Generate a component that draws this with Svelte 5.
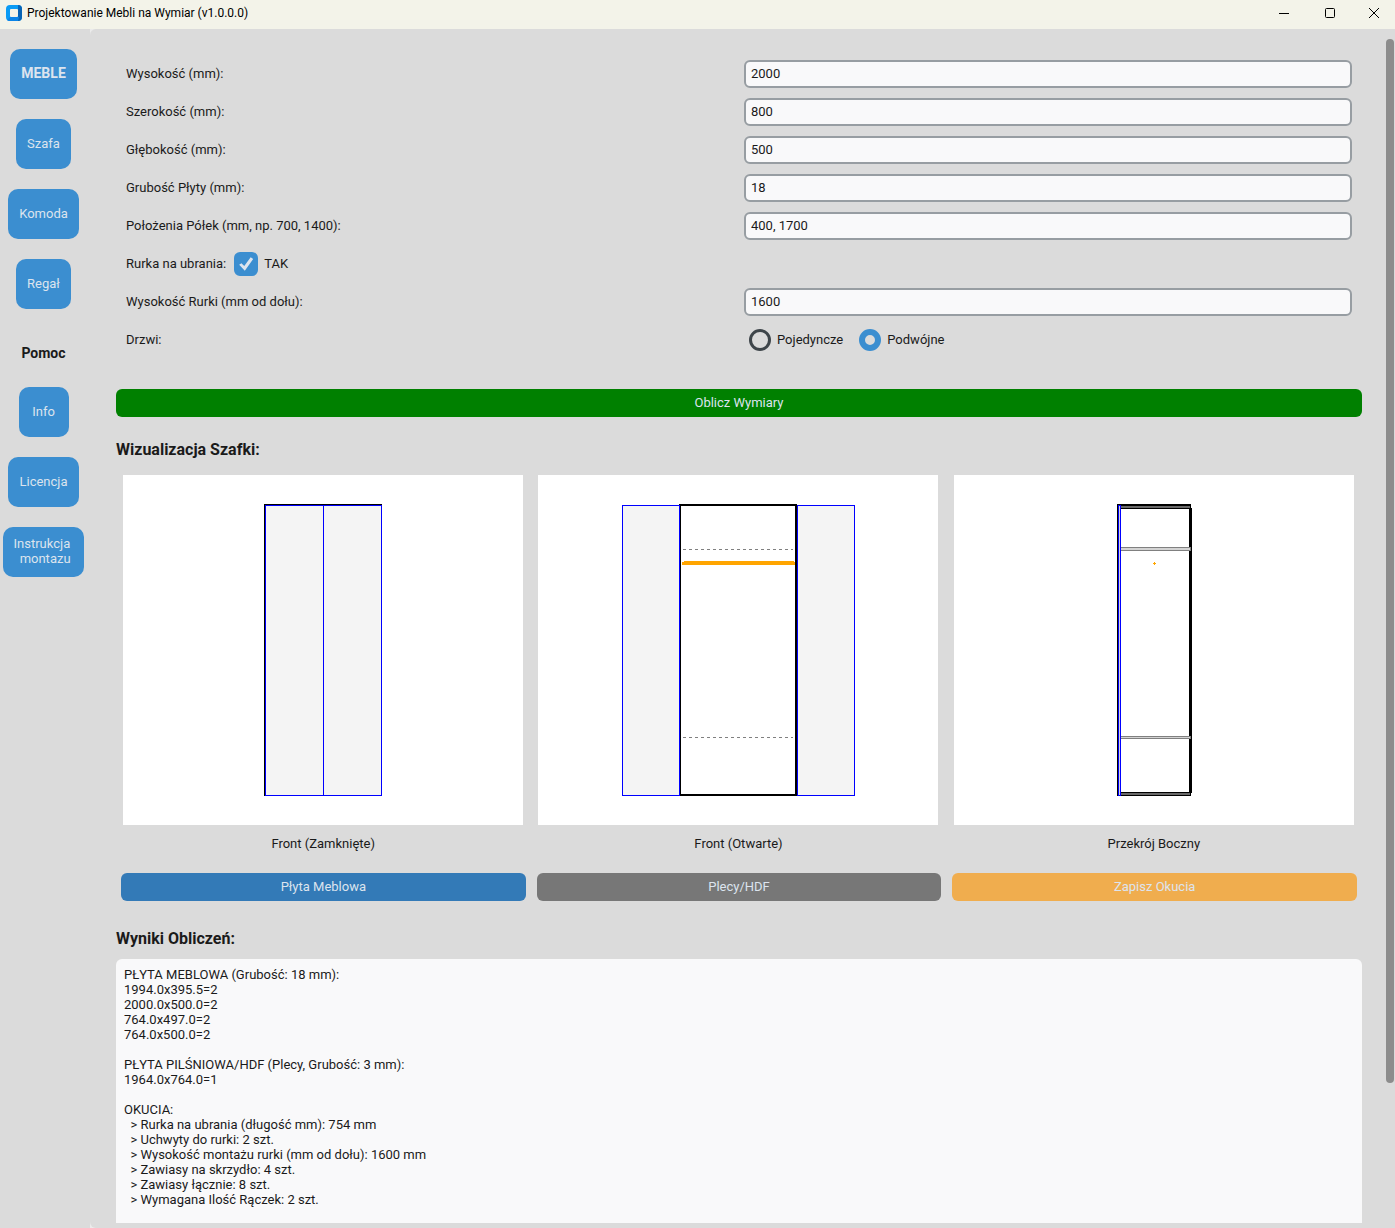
<script>
  let height = "2000"
  let width = "800"
  let depth = "500"
  let thickness = "18"
  let shelves = "400, 1700"
  let hasRod = true
  let rodHeight = "1600"
  let doors = "double"

  const furniture = ["Szafa", "Komoda", "Regał"]
  const help = ["Info", "Licencja", "Instrukcja \n montazu"]

  const results = `PŁYTA MEBLOWA (Grubość: 18 mm):
1994.0x395.5=2
2000.0x500.0=2
764.0x497.0=2
764.0x500.0=2

PŁYTA PILŚNIOWA/HDF (Plecy, Grubość: 3 mm):
1964.0x764.0=1

OKUCIA:
  > Rurka na ubrania (długość mm): 754 mm
  > Uchwyty do rurki: 2 szt.
  > Wysokość montażu rurki (mm od dołu): 1600 mm
  > Zawiasy na skrzydło: 4 szt.
  > Zawiasy łącznie: 8 szt.
  > Wymagana Ilość Rączek: 2 szt.
`

  // Scrollbar thumb follows the scrolled panel
  let viewHeight = 1
  let contentHeight = 1
  let trackHeight = 1
  let scrollTop = 0

  $: thumbSize = Math.min(1, viewHeight / contentHeight) * trackHeight
  $: thumbTop = (scrollTop / contentHeight) * trackHeight

  function handleScroll(e) {
    scrollTop = e.target.scrollTop
  }
</script>

<div class="window">
  <header class="titlebar">
    <svg class="logo" width="16" height="16" viewBox="0 0 16 16" aria-hidden="true">
      <rect width="16" height="16" rx="4" fill="#0a9bf5" />
      <path d="M12 0a4 4 0 0 1 4 4v8a4 4 0 0 1-4 4z" fill="#0763b5" />
      <path d="M4 12h9l-1 4H4a4 4 0 0 1-3-1z" fill="#0a84e8" />
      <rect x="4" y="4" width="8" height="8" rx="1" fill="#f3f3e9" />
    </svg>
    <h1 class="title">Projektowanie Mebli na Wymiar (v1.0.0.0)</h1>
    <div class="windowButtons">
      <button class="windowButton" aria-label="Minimalizuj">
        <svg width="12" height="12" viewBox="0 0 12 12"><path d="M1 6.5h10" /></svg>
      </button>
      <button class="windowButton" aria-label="Maksymalizuj">
        <svg width="12" height="12" viewBox="0 0 12 12">
          <rect x="1.5" y="1.5" width="9" height="9" rx="1" />
        </svg>
      </button>
      <button class="windowButton" aria-label="Zamknij">
        <svg width="12" height="12" viewBox="0 0 12 12"><path d="M1 1l10 10M11 1L1 11" /></svg>
      </button>
    </div>
  </header>

  <div class="body">
    <nav class="sidebar">
      <button class="navButton bold">MEBLE</button>
      {#each furniture as name}
        <button class="navButton">{name}</button>
      {/each}
      <h2 class="navTitle">Pomoc</h2>
      {#each help as name}
        <button class="navButton">{name}</button>
      {/each}
    </nav>

    <main class="main">
      <div class="scroller" bind:clientHeight={viewHeight} on:scroll={handleScroll}>
        <div class="content" bind:clientHeight={contentHeight}>
          <form class="form" on:submit|preventDefault>
            <label class="label" for="height">Wysokość (mm):</label>
            <input id="height" class="input" type="text" bind:value={height} />
            <label class="label" for="width">Szerokość (mm):</label>
            <input id="width" class="input" type="text" bind:value={width} />
            <label class="label" for="depth">Głębokość (mm):</label>
            <input id="depth" class="input" type="text" bind:value={depth} />
            <label class="label" for="thickness">Grubość Płyty (mm):</label>
            <input id="thickness" class="input" type="text" bind:value={thickness} />
            <label class="label" for="shelves">Położenia Półek (mm, np. 700, 1400):</label>
            <input id="shelves" class="input" type="text" bind:value={shelves} />
            <div class="rodRow">
              <span class="label">Rurka na ubrania:</span>
              <label class="option">
                <input class="checkbox" type="checkbox" bind:checked={hasRod} />
                <span class="label">TAK</span>
              </label>
            </div>
            <label class="label" for="rodHeight">Wysokość Rurki (mm od dołu):</label>
            <input id="rodHeight" class="input" type="text" bind:value={rodHeight} />
            <span class="label">Drzwi:</span>
            <div class="doors">
              <label class="option">
                <input class="radio" type="radio" name="doors" value="single" bind:group={doors} />
                <span class="label">Pojedyncze</span>
              </label>
              <label class="option">
                <input class="radio" type="radio" name="doors" value="double" bind:group={doors} />
                <span class="label">Podwójne</span>
              </label>
            </div>
          </form>

          <button class="button green">Oblicz Wymiary</button>

          <h2 class="heading">Wizualizacja Szafki:</h2>
          <div class="views">
            <figure class="view">
              <svg class="canvas" viewBox="0 0 400 350" shape-rendering="crispEdges">
                <rect x="141" y="29" width="118" height="292" fill="#000" />
                <rect x="142" y="30" width="117" height="291" fill="#00f" />
                <rect x="143" y="31" width="57" height="289" fill="#f4f4f4" />
                <rect x="201" y="31" width="57" height="289" fill="#f4f4f4" />
              </svg>
              <figcaption>Front (Zamknięte)</figcaption>
            </figure>
            <figure class="view">
              <svg class="canvas" viewBox="0 0 400 350" shape-rendering="crispEdges">
                <rect x="141" y="29" width="118" height="292" fill="#000" />
                <rect x="143" y="31" width="114" height="288" fill="#fff" />
                <rect x="84" y="30" width="58" height="291" fill="#00f" />
                <rect x="85" y="31" width="56" height="289" fill="#f4f4f4" />
                <rect x="259" y="30" width="58" height="291" fill="#00f" />
                <rect x="260" y="31" width="56" height="289" fill="#f4f4f4" />
                <path d="M145 74.5h110M145 262.5h110" stroke="#808080" stroke-dasharray="3 3" />
                <rect x="146" y="86" width="110" height="4" fill="#ffa500" />
                <rect x="144" y="87" width="113" height="3" fill="#ffa500" />
              </svg>
              <figcaption>Front (Otwarte)</figcaption>
            </figure>
            <figure class="view">
              <svg class="canvas" viewBox="0 0 400 350" shape-rendering="crispEdges">
                <rect x="235" y="33" width="3" height="285" fill="#000" />
                <rect x="163" y="29" width="1" height="292" fill="#000" />
                <rect x="163" y="29" width="74" height="5" fill="#000" />
                <rect x="164" y="31" width="72" height="2" fill="#696969" />
                <rect x="163" y="317" width="74" height="4" fill="#000" />
                <rect x="164" y="318" width="72" height="2" fill="#696969" />
                <rect x="166" y="72" width="71" height="4" fill="#808080" />
                <rect x="167" y="73" width="69" height="2" fill="#d3d3d3" />
                <rect x="166" y="261" width="71" height="3" fill="#808080" />
                <rect x="167" y="262" width="69" height="1" fill="#d3d3d3" />
                <rect x="164" y="30" width="3" height="291" fill="#00f" />
                <rect x="165" y="31" width="1" height="289" fill="#d3d3d3" />
                <path d="M200 87h1v1h1v1h-1v1h-1v-1h-1v-1h1z" fill="#ffa500" />
              </svg>
              <figcaption>Przekrój Boczny</figcaption>
            </figure>
          </div>

          <div class="actions">
            <button class="button blue">Płyta Meblowa</button>
            <button class="button grey">Plecy/HDF</button>
            <button class="button orange">Zapisz Okucia</button>
          </div>

          <h2 class="heading resultsHeading"><label for="results">Wyniki Obliczeń:</label></h2>
          <textarea id="results" class="results" readonly value={results}></textarea>
        </div>
      </div>
      <div class="track" bind:clientHeight={trackHeight}>
        <div class="thumb" style="height: {thumbSize}px; margin-top: {thumbTop}px"></div>
      </div>
    </main>
  </div>
</div>

<style>
  :global(body) {
    margin: 0;
  }
  .window {
    display: flex;
    flex-direction: column;
    height: 100vh;
    font-family: Roboto, "Liberation Sans", sans-serif;
    font-size: 13px;
    line-height: 15px;
    color: #1a1a1a;
    background: #ebebeb;
  }
  .window * {
    box-sizing: border-box;
  }
  button,
  input,
  textarea {
    font: inherit;
    color: inherit;
    margin: 0;
  }

  .titlebar {
    display: flex;
    align-items: center;
    flex: none;
    height: 29px;
    padding: 0 0 3px 6px;
    background: #f3f3e9;
  }
  .title {
    flex: 1;
    margin: 0 0 0 5px;
    font-size: 12px;
    line-height: 16px;
    font-weight: 400;
    color: #000;
  }
  .windowButtons {
    display: flex;
  }
  .windowButton {
    display: flex;
    align-items: center;
    justify-content: center;
    width: 46px;
    height: 26px;
    padding: 0;
    border: none;
    background: none;
  }
  .windowButton:last-child {
    width: 42px;
  }
  .windowButton svg {
    fill: none;
    stroke: #000;
  }

  .body {
    display: flex;
    flex: 1;
    min-height: 0;
  }
  .sidebar {
    display: flex;
    flex-direction: column;
    align-items: center;
    flex: none;
    gap: 20px;
    width: 90px;
    padding: 20px 3px 0 0;
    background: #dbdbdb;
  }
  .navButton {
    flex: none;
    min-width: 50px;
    height: 50px;
    padding: 0 11px 2px;
    border: none;
    border-radius: 10px;
    color: #dce4ee;
    background: #3b8ed0;
    white-space: pre;
  }
  .bold {
    font-size: 14px;
    font-weight: 700;
  }
  .navTitle {
    margin: 0;
    padding-top: 10px;
    font-size: 14px;
    line-height: 28px;
  }

  .main {
    display: flex;
    flex: 1;
    min-width: 0;
    gap: 3px;
    padding: 5px 1px;
    border-radius: 6px 0 0 6px;
    background: #dbdbdb;
  }
  .scroller {
    flex: 1;
    min-width: 0;
    overflow-y: auto;
    scrollbar-width: none;
  }
  .content {
    display: flex;
    flex-direction: column;
    padding: 26px 21px 18px 25px;
  }
  .track {
    flex: none;
    width: 8px;
    margin: 5px 0;
  }
  .thumb {
    border-radius: 4px;
    background: #8c8c8c;
  }

  .form {
    display: grid;
    grid-template-columns: 1fr 1fr;
    grid-auto-rows: 28px;
    gap: 10px;
    align-items: center;
    padding: 0 10px;
  }
  .label {
    padding-bottom: 2px;
  }
  .input {
    width: 100%;
    height: 28px;
    padding: 0 5px 2px;
    border: 2px solid #979da2;
    border-radius: 6px;
    outline: none;
    background: #f9f9fa;
  }
  .rodRow {
    display: flex;
    align-items: center;
    grid-column: span 2;
    gap: 8px;
  }
  .option {
    display: flex;
    align-items: center;
    gap: 6px;
  }
  .doors {
    display: flex;
    gap: 16px;
    padding-left: 5px;
  }
  .checkbox {
    appearance: none;
    display: grid;
    place-items: center;
    width: 24px;
    height: 24px;
    border: 3px solid #3e454a;
    border-radius: 6px;
  }
  .checkbox:checked {
    border-color: #3b8ed0;
    background: #3b8ed0;
  }
  .checkbox:checked::before {
    content: "";
    width: 14px;
    height: 14px;
    background: #dce4ee;
    clip-path: polygon(0 56%, 16% 44%, 36% 64%, 82% 2%, 100% 14%, 40% 98%);
  }
  .radio {
    appearance: none;
    width: 22px;
    height: 22px;
    border: 3px solid #3e454a;
    border-radius: 50%;
  }
  .radio:checked {
    border: 6px solid #3b8ed0;
  }

  .button {
    height: 28px;
    padding: 0 8px 2px;
    border: none;
    border-radius: 6px;
    color: #dce4ee;
  }
  .green {
    margin-top: 35px;
    background: #008000;
  }
  .blue {
    background: #337ab7;
  }
  .grey {
    background: #777777;
  }
  .orange {
    background: #f0ad4e;
  }

  .heading {
    margin: 19px 0 6px;
    font-size: 16px;
    line-height: 28px;
  }
  .resultsHeading {
    margin-top: 24px;
  }
  .views,
  .actions {
    display: grid;
    grid-template-columns: 1fr 1fr 1fr;
  }
  .views {
    gap: 1px;
    padding-right: 1px;
  }
  .view {
    display: flex;
    flex-direction: column;
    align-items: center;
    margin: 5px 0 0;
  }
  .canvas {
    width: 400px;
    max-width: 100%;
    background: #fff;
  }
  figcaption {
    line-height: 28px;
    margin-top: 5px;
  }
  .actions {
    gap: 11px;
    margin-top: 15px;
    padding: 0 5px;
  }
  .results {
    display: block;
    width: 100%;
    height: 400px;
    padding: 8px;
    border: none;
    border-radius: 6px;
    outline: none;
    resize: none;
    background: #f9f9fa;
  }
</style>
